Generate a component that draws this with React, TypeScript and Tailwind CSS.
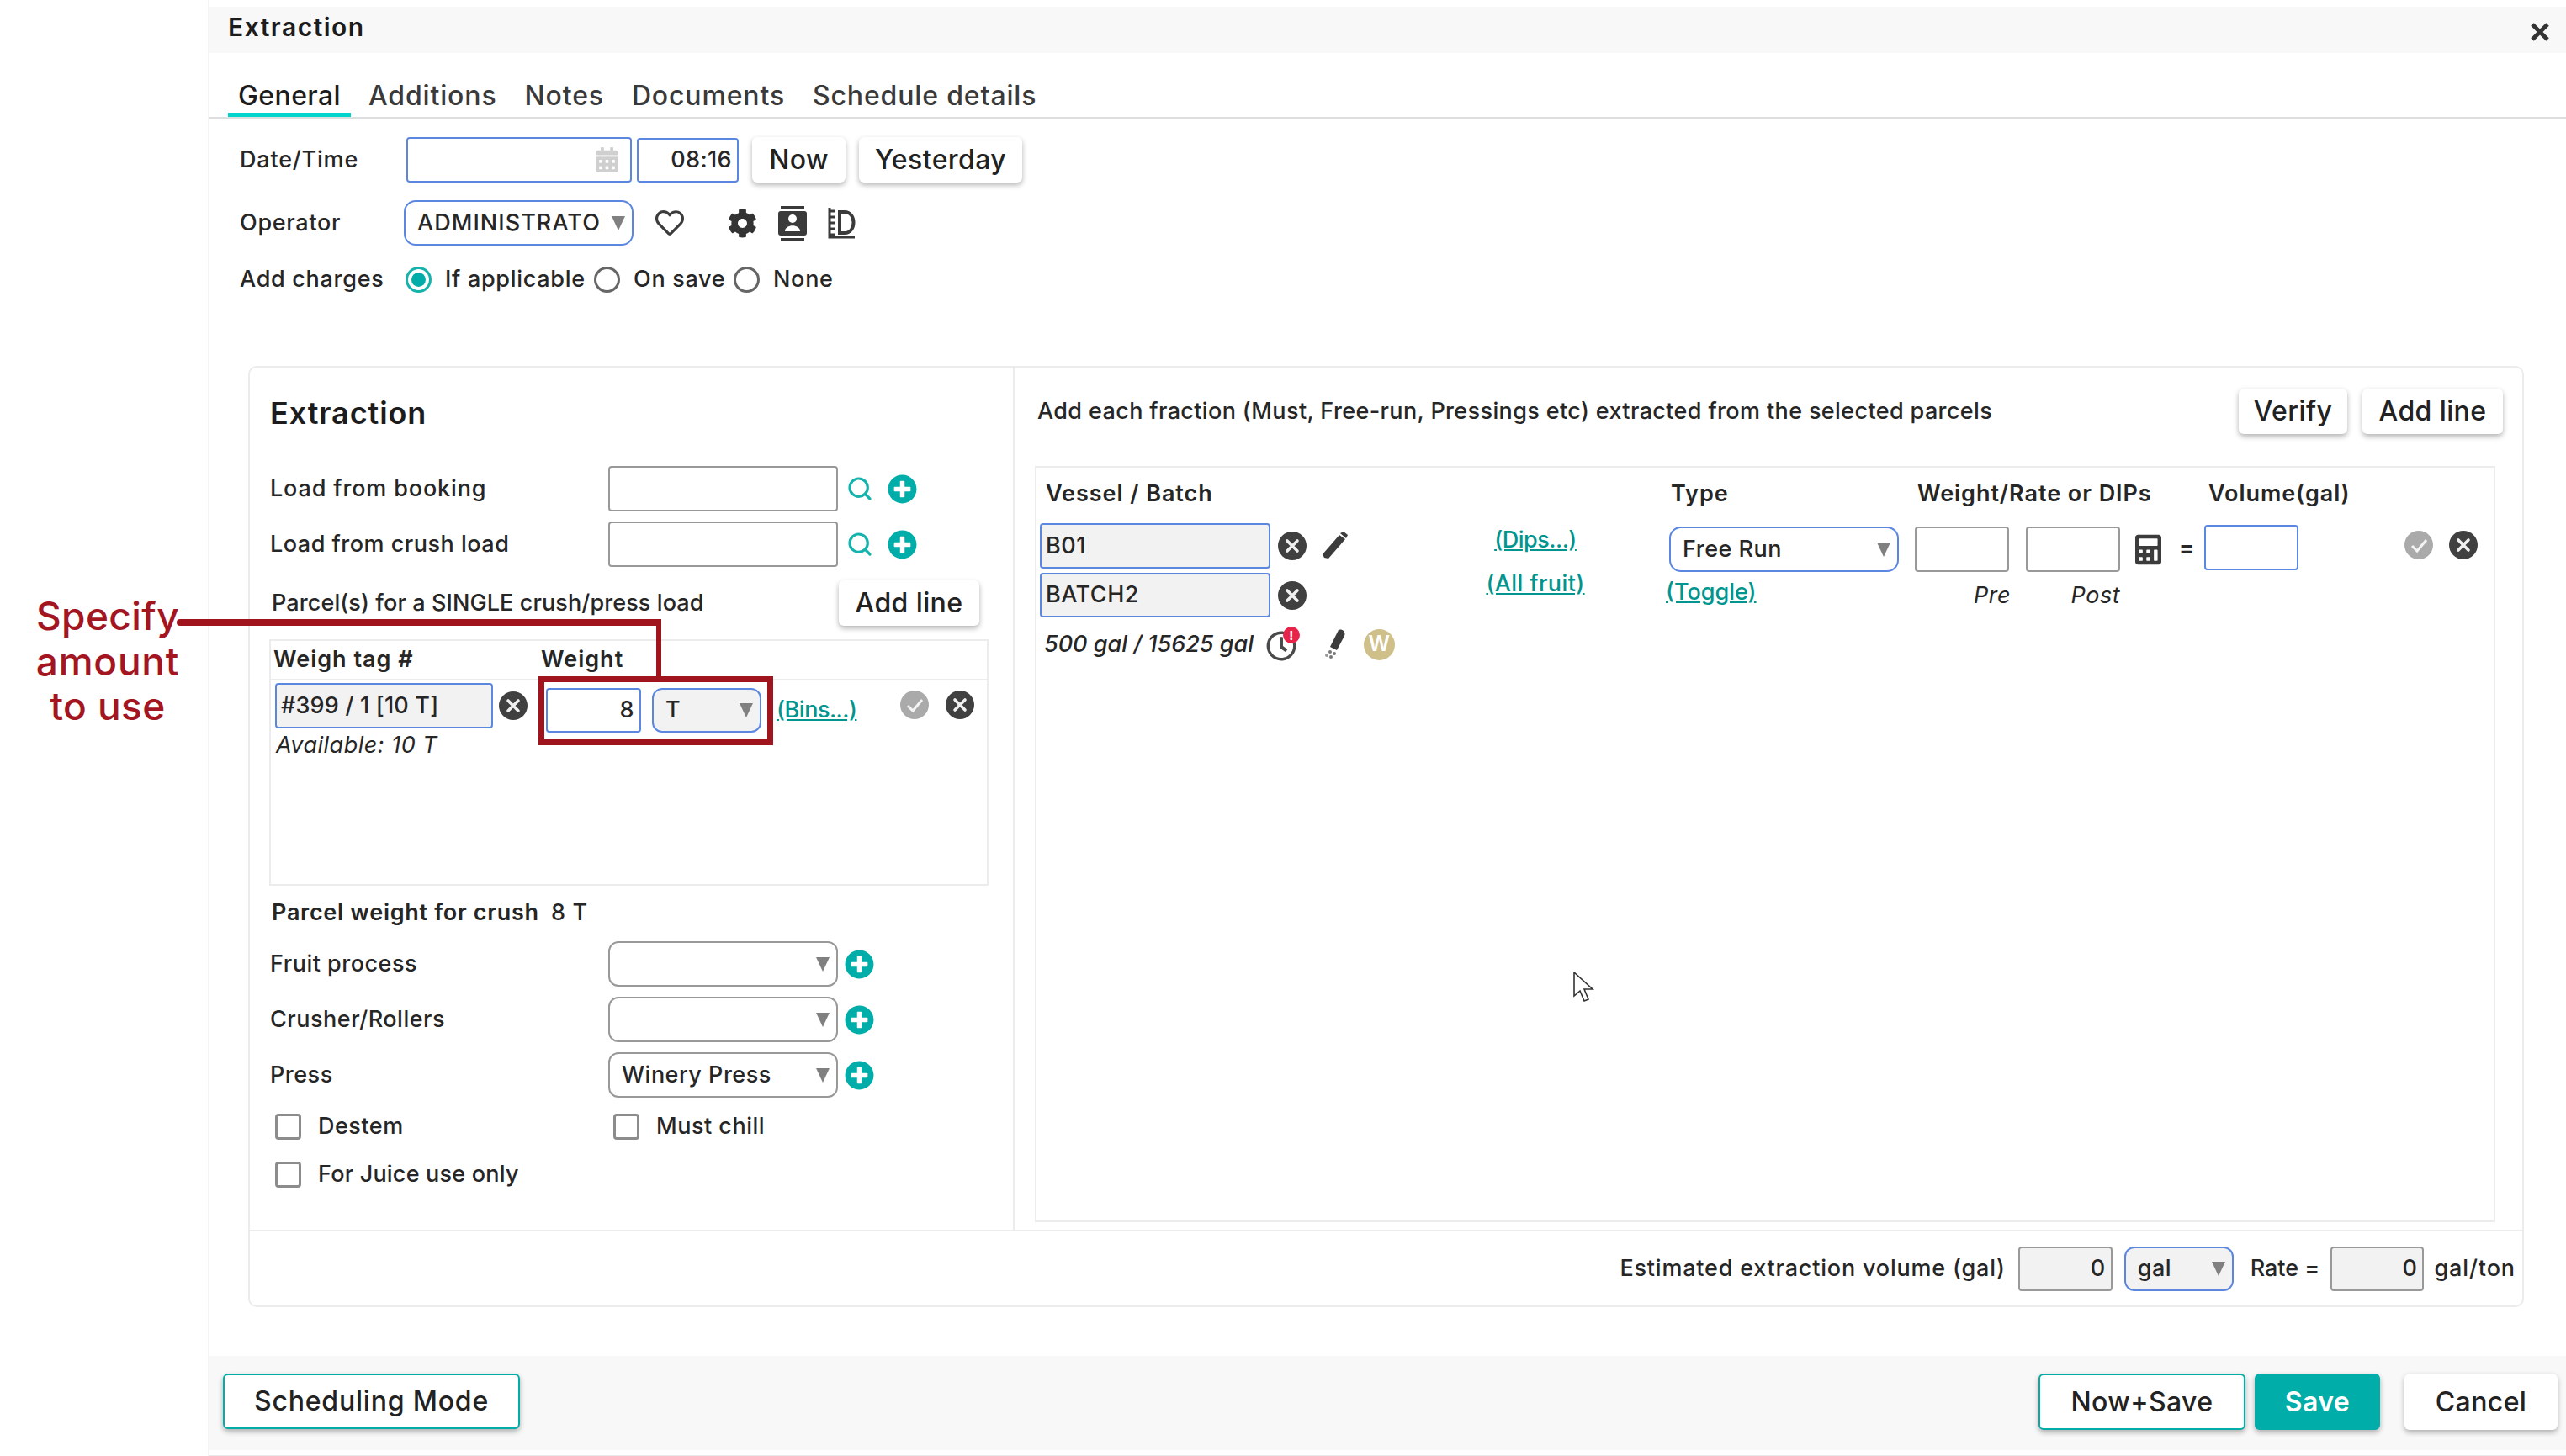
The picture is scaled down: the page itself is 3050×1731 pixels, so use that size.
import React from "react";
import { FaCog, FaRegHeart, FaPlusCircle, FaCalculator, FaRegClock, FaCalendarAlt } from "react-icons/fa";
import { Search } from "lucide-react";

const Arrow = () => (
  <svg width="16" height="17" viewBox="0 0 16 17" className="shrink-0">
    <polygon points="0,0 16,0 8,17" fill="#808080" />
  </svg>
);

const XCircle = ({ className = "" }: { className?: string }) => (
  <svg viewBox="0 0 34 34" className={"w-[34px] h-[34px] shrink-0 " + className}>
    <circle cx="17" cy="17" r="17" fill="#404040" />
    <path d="M11 11 L23 23 M23 11 L11 23" stroke="#f0f0f0" strokeWidth="3.6" strokeLinecap="round" />
  </svg>
);

const CheckCircle = ({ className = "" }: { className?: string }) => (
  <svg viewBox="0 0 34 34" className={"w-[34px] h-[34px] shrink-0 " + className}>
    <circle cx="17" cy="17" r="17" fill="#aaaaaa" />
    <path d="M9 18 L15 24 L26 11" stroke="#f4f4f4" strokeWidth="3" fill="none" />
  </svg>
);

const Plus = ({ className = "" }: { className?: string }) => (
  <FaPlusCircle className={"text-[#00ada8] w-[35px] h-[35px] shrink-0 " + className} />
);

const Lens = () => <Search className="text-[#16b3ad] w-[32px] h-[32px] shrink-0 ml-[10px]" strokeWidth={2.4} />;

const Btn = ({ className = "", children }: { className?: string; children: React.ReactNode }) => (
  <div className={"flex items-center justify-center bg-white rounded-[6px] shadow-[0_3px_6px_rgba(0,0,0,0.3)] text-[32px] text-[#222] font-medium tracking-[0.4px] shrink-0 " + className}>
    {children}
  </div>
);

const Link = ({ className = "", children }: { className?: string; children: React.ReactNode }) => (
  <span className={"text-[#00958e] underline text-[27px] font-medium tracking-[0px] " + className}>{children}</span>
);

export default function App() {
  return (
    <div className="relative w-[3050px] h-[1731px] bg-white overflow-hidden text-[27px] font-medium tracking-[0.5px] text-[#262626] [font-family:Inter,'Liberation_Sans',sans-serif]">
      <div className="ml-[247px] pt-[8px] h-full flex flex-col border-l border-[#f4f4f4]">
        {/* Title bar */}
        <div className="h-[55px] shrink-0 bg-[#f8f8f8] pl-[23px] pr-[19px] pb-[6px] flex items-center justify-between">
          <span className="text-[30px] font-semibold text-[#1c1c1c] tracking-[1.5px]">Extraction</span>
          <svg width="24" height="24" viewBox="0 0 24 24" className="mt-[10px]">
            <path d="M3 3 L21 21 M21 3 L3 21" stroke="#333" strokeWidth="5" />
          </svg>
        </div>

        {/* Tabs */}
        <div className="h-[78px] shrink-0 border-b-2 border-[#dedede] pl-[23px] flex items-end gap-[9px] text-[32px] leading-[36px] tracking-[0.85px] text-[#3a3a3a]">
          <div className="h-[50px] pt-[7px] w-[146px] flex justify-center border-b-[5px] border-[#00d4cc] text-[#1c1c1c] tracking-[0.4px]"><span>General</span></div>
          <div className="h-[50px] pt-[7px] px-[12px]">Additions</div>
          <div className="h-[50px] pt-[7px] px-[12px]">Notes</div>
          <div className="h-[50px] pt-[7px] px-[12px]">Documents</div>
          <div className="h-[50px] pt-[7px] px-[12px]">Schedule details</div>
        </div>

        {/* Date row */}
        <div className="flex items-center pl-[37px] mt-[22px] h-[54px] shrink-0">
          <span className="w-[198px] tracking-[0.8px]">Date/Time</span>
          <div className="w-[268px] h-[54px] border-2 border-[#5b87e0] rounded-[4px] flex items-center justify-end pr-[14px]">
            <FaCalendarAlt className="text-[#cfcfcf] w-[27px] h-[30px]" />
          </div>
          <div className="w-[121px] h-[53px] ml-[6px] border-2 border-[#5b87e0] rounded-[4px] flex items-center justify-end pr-[6px] tracking-[0.4px]">08:16</div>
          <Btn className="w-[111px] h-[54px] ml-[16px]">Now</Btn>
          <Btn className="w-[194px] h-[54px] ml-[16px]">Yesterday</Btn>
        </div>

        {/* Operator row */}
        <div className="flex items-center pl-[37px] mt-[21px] h-[54px] shrink-0">
          <span className="w-[195px] tracking-[0.7px]">Operator</span>
          <div className="w-[273px] h-[54px] border-2 border-[#5b87e0] rounded-[14px] flex items-center pl-[14px] overflow-hidden">
            <span className="w-[220px] shrink-0 overflow-hidden whitespace-nowrap tracking-[1.05px]">ADMINISTRATOR</span>
            <span className="ml-[11px]"><Arrow /></span>
          </div>
          <FaRegHeart className="ml-[25px] w-[36px] h-[34px] text-[#3c3c3c]" />
          <FaCog className="ml-[51px] w-[35px] h-[35px] text-[#333]" />
          <svg viewBox="0 0 34 41" className="ml-[25px] w-[34px] h-[41px]">
            <rect x="3" y="0" width="28" height="3" fill="#3a3a3a" />
            <rect x="3" y="38" width="28" height="3" fill="#3a3a3a" />
            <rect x="0" y="6" width="34" height="29" rx="3" fill="#3a3a3a" />
            <circle cx="17" cy="15" r="5" fill="#fff" />
            <path d="M8 30 C8 21 26 21 26 30 Z" fill="#fff" />
          </svg>
          <svg viewBox="0 0 33 38" className="ml-[25px] w-[33px] h-[38px]" fill="none" stroke="#3a3a3a">
            <path d="M2 1 V36 H32 M2 5 H8 M2 12 H8 M2 19 H8 M2 26 H8 M2 33 H8" strokeWidth="3" />
            <path d="M14 6 H20 C34 6 34 31 20 31 H14 Z" strokeWidth="4" />
          </svg>
        </div>

        {/* Charges row */}
        <div className="flex items-center pl-[37px] mt-[25px] h-[31px] shrink-0 tracking-[0.7px] whitespace-nowrap">
          <span className="w-[197px]">Add charges</span>
          <div className="w-[31px] h-[31px] rounded-full border-[3px] border-[#16b3ad] flex items-center justify-center">
            <div className="w-[17px] h-[17px] rounded-full bg-[#00ada8]" />
          </div>
          <span className="ml-[16px] w-[163px]">If applicable</span>
          <div className="w-[31px] h-[31px] rounded-full border-[3px] border-[#666] ml-[14px]" />
          <span className="ml-[16px] w-[104px]">On save</span>
          <div className="w-[31px] h-[31px] rounded-full border-[3px] border-[#666] ml-[15px]" />
          <span className="ml-[16px]">None</span>
        </div>

        {/* Main panel */}
        <div className="ml-[47px] mt-[87px] w-[2705px] h-[1119px] shrink-0 border-2 border-[#ececec] rounded-[10px] flex flex-col">
          <div className="h-[1027px] shrink-0 flex border-b-2 border-[#ececec]">
            {/* Left column */}
            <div className="w-[909px] shrink-0 border-r-2 border-[#ececec] pl-[24px] flex flex-col">
              <h2 className="mt-[32px] h-[44px] flex items-center text-[36px] font-semibold text-[#1c1c1c] tracking-[0.9px]">Extraction</h2>
              <div className="mt-[41px] h-[54px] flex items-center">
                <span className="w-[402px] tracking-[0.85px]">Load from booking</span>
                <div className="w-[273px] h-[54px] border-2 border-[#999] rounded-[4px]" />
                <Lens />
                <Plus className="ml-[17px]" />
              </div>
              <div className="mt-[12px] h-[54px] flex items-center">
                <span className="w-[402px]">Load from crush load</span>
                <div className="w-[273px] h-[54px] border-2 border-[#999] rounded-[4px]" />
                <Lens />
                <Plus className="ml-[17px]" />
              </div>
              <div className="mt-[16px] h-[54px] flex items-center justify-between pl-[2px] pr-[40px]">
                <span className="tracking-[0.1px]">Parcel(s) for a SINGLE crush/press load</span>
                <Btn className="w-[167px] h-[54px]">Add line</Btn>
              </div>

              {/* Parcel table */}
              <div className="mt-[16px] -ml-px w-[855px] h-[293px] border-2 border-[#ececec]">
                <div className="h-[47px] border-b-2 border-[#ececec] flex items-center pl-[3px] font-semibold tracking-[1px]">
                  <span className="w-[318px]">Weigh tag #</span>
                  <span>Weight</span>
                </div>
                <div className="flex items-start pl-[5px]">
                  <div className="w-[322px] shrink-0 pt-[3px]">
                    <div className="flex items-center">
                      <div className="w-[259px] h-[54px] bg-[#f2f2f2] border-2 border-[#5b87e0] rounded-[4px] flex items-center pl-[5px] tracking-[0.2px]">#399 / 1 [10 T]</div>
                      <XCircle className="ml-[7px]" />
                    </div>
                    <div className="mt-[4px] h-[32px] flex items-center italic font-normal pl-px">Available: 10 T</div>
                  </div>
                  <div className="w-[113px] h-[53px] mt-[9px] border-2 border-[#5b87e0] rounded-[4px] flex items-center justify-end pr-[6px]">8</div>
                  <div className="w-[130px] h-[53px] mt-[9px] ml-[13px] bg-[#f2f2f2] border-2 border-[#5b87e0] rounded-[12px] flex items-center justify-between pl-[14px] pr-[8px]">
                    <span>T</span>
                    <Arrow />
                  </div>
                  <div className="h-[53px] mt-[9px] ml-[18px] flex items-center w-[94px]"><Link className="!tracking-[-0.5px]">(Bins...)</Link></div>
                  <CheckCircle className="ml-[53px] mt-[12px]" />
                  <XCircle className="ml-[20px] mt-[12px]" />
                </div>
              </div>

              <div className="mt-[15px] h-[34px] flex items-center pl-[2px] font-semibold tracking-[0.7px]">
                <span className="w-[332px]">Parcel weight for crush</span>
                <span className="font-medium">8 T</span>
              </div>

              {[
                ["Fruit process", ""],
                ["Crusher/Rollers", ""],
                ["Press", "Winery Press"],
              ].map(([label, val], i) => (
                <div key={label} className={(i === 0 ? "mt-[17px]" : "mt-[12px]") + " h-[54px] flex items-center"}>
                  <span className="w-[402px]">{label}</span>
                  <div className="w-[273px] h-[54px] border-2 border-[#999] rounded-[12px] flex items-center justify-between pl-[14px] pr-[8px]">
                    <span>{val}</span>
                    <Arrow />
                  </div>
                  <Plus className="ml-[8px]" />
                </div>
              ))}

              <div className="mt-[19px] h-[31px] flex items-center pl-[6px]">
                <div className="w-[402px] flex items-center">
                  <div className="w-[31px] h-[31px] border-[3px] border-[#8c8c8c] rounded-[4px]" />
                  <span className="ml-[20px]">Destem</span>
                </div>
                <div className="w-[31px] h-[31px] border-[3px] border-[#8c8c8c] rounded-[4px]" />
                <span className="ml-[20px]">Must chill</span>
              </div>
              <div className="mt-[26px] h-[31px] flex items-center pl-[6px]">
                <div className="w-[31px] h-[31px] border-[3px] border-[#8c8c8c] rounded-[4px]" />
                <span className="ml-[20px] tracking-[0.2px]">For Juice use only</span>
              </div>
            </div>

            {/* Right column */}
            <div className="flex-1 min-w-0 pl-[24px] pr-[32px] flex flex-col">
              <div className="mt-[25px] h-[54px] flex items-center -mr-[9px] pl-[3px]">
                <span className="flex-1 tracking-[0.37px]">Add each fraction (Must, Free-run, Pressings etc) extracted from the selected parcels</span>
                <Btn className="w-[129px] h-[54px]">Verify</Btn>
                <Btn className="w-[167px] h-[54px] ml-[18px]">Add line</Btn>
              </div>

              <div className="mt-[38px] h-[899px] border-2 border-[#ececec] flex flex-col">
                <div className="h-[62px] shrink-0 flex items-center pl-[11px] font-semibold tracking-[0.95px]">
                  <span className="w-[743px]">Vessel / Batch</span>
                  <span className="w-[293px]">Type</span>
                  <span className="w-[346px] whitespace-nowrap">Weight/Rate or DIPs</span>
                  <span>Volume(gal)</span>
                </div>
                <div className="flex items-start pl-[4px]">
                  <div className="w-[530px] shrink-0 pt-[4px]">
                    <div className="flex items-center h-[54px]">
                      <div className="w-[274px] h-[54px] bg-[#f2f2f2] border-2 border-[#5b87e0] rounded-[4px] flex items-center pl-[5px]">B01</div>
                      <XCircle className="ml-[9px]" />
                      <svg viewBox="0 0 32 34" className="ml-[17px] w-[32px] h-[34px]">
                        <path d="M4 31 L2 27 L22 4 L29 9 L9 32 Z" fill="#3c3c3c" />
                        <path d="M23 2 L27 0 L32 4 L30 8 Z" fill="#3c3c3c" />
                      </svg>
                    </div>
                    <div className="flex items-center h-[53px] mt-[5px]">
                      <div className="w-[274px] h-[53px] bg-[#f2f2f2] border-2 border-[#5b87e0] rounded-[4px] flex items-center pl-[5px]">BATCH2</div>
                      <XCircle className="ml-[9px]" />
                    </div>
                    <div className="flex items-center h-[40px] mt-[12px] pl-[5px]">
                      <span className="italic w-[264px] whitespace-nowrap tracking-[0px]">500 gal / 15625 gal</span>
                      <div className="relative w-[37px] h-[40px] flex items-end">
                        <FaRegClock className="w-[36px] h-[36px] text-[#4a4a4a]" />
                        <div className="absolute -top-px right-[-3px] w-[20px] h-[20px] rounded-full bg-[#e8234a] flex items-center justify-center text-white text-[15px] font-bold leading-none">!</div>
                      </div>
                      <svg viewBox="0 0 26 36" className="ml-[31px] w-[26px] h-[36px]">
                        <path d="M8 21 L18 1 C22 -1 27 3 25 8 L16 25 Z" fill="#3c3c3c" />
                        <circle cx="8" cy="27" r="2" fill="#777" />
                        <circle cx="4" cy="31" r="2" fill="#999" />
                        <circle cx="9" cy="33" r="2" fill="#777" />
                        <circle cx="13" cy="29" r="2" fill="#777" />
                      </svg>
                      <div className="ml-[22px] w-[37px] h-[37px] rounded-full bg-[#cfc08a] flex items-center justify-center text-white text-[25px] font-semibold">W</div>
                    </div>
                  </div>
                  <div className="w-[118px] shrink-0 pt-[4px] flex flex-col items-center">
                    <div className="h-[40px] flex items-center"><Link className="!tracking-[-0.5px]">(Dips...)</Link></div>
                    <div className="h-[40px] mt-[12px] flex items-center"><Link className="!tracking-[0.4px]">(All fruit)</Link></div>
                  </div>
                  <div className="w-[277px] ml-[96px] shrink-0 pt-[8px] flex flex-col">
                    <div className="ml-[4px] w-[273px] h-[54px] border-2 border-[#5b87e0] rounded-[14px] flex items-center justify-between pl-[14px] pr-[8px]">
                      <span>Free Run</span>
                      <Arrow />
                    </div>
                    <div className="h-[40px] mt-[4px] flex items-center"><Link>(Toggle)</Link></div>
                  </div>
                  <div className="ml-[19px] w-[244px] shrink-0 pt-[8px]">
                    <div className="flex gap-[20px]">
                      <div className="w-[112px] h-[54px] border-2 border-[#999] rounded-[4px]" />
                      <div className="w-[112px] h-[54px] border-2 border-[#999] rounded-[4px]" />
                    </div>
                    <div className="flex mt-[8px] h-[40px] items-center italic font-normal pl-[70px]">
                      <span className="w-[116px]">Pre</span>
                      <span>Post</span>
                    </div>
                  </div>
                  <FaCalculator className="ml-[18px] mt-[16px] w-[31px] h-[39px] text-[#3c3c3c] shrink-0" />
                  <span className="ml-[21px] w-[15px] mt-[18px] h-[32px] flex items-center font-bold">=</span>
                  <div className="ml-[15px] mt-[6px] w-[112px] h-[54px] border-2 border-[#5b87e0] rounded-[4px] shrink-0" />
                  <CheckCircle className="ml-[126px] mt-[13px]" />
                  <XCircle className="ml-[19px] mt-[13px]" />
                </div>
              </div>
            </div>
          </div>

          {/* Estimated row */}
          <div className="flex-1 flex items-center justify-end pr-[8px]">
            <span className="tracking-[0.8px]">Estimated extraction volume (gal)</span>
            <div className="w-[112px] h-[53px] ml-[15px] bg-[#f2f2f2] border-2 border-[#999] rounded-[4px] flex items-center justify-end pr-[6px]">0</div>
            <div className="w-[130px] h-[53px] ml-[14px] bg-[#f2f2f2] border-2 border-[#5b87e0] rounded-[12px] flex items-center justify-between pl-[14px] pr-[8px]">
              <span>gal</span>
              <Arrow />
            </div>
            <span className="ml-[20px] tracking-[0px]">Rate =</span>
            <div className="w-[111px] h-[53px] ml-[13px] bg-[#f2f2f2] border-2 border-[#999] rounded-[4px] flex items-center justify-end pr-[6px]">0</div>
            <span className="ml-[12px] tracking-[0.9px]">gal/ton</span>
          </div>
        </div>

        {/* Dialog footer */}
        <div className="mt-[58px] h-[112px] shrink-0 bg-[#f8f8f8] pl-[17px] pr-[10px] pt-[21px] flex items-start justify-between">
          <Btn className="w-[353px] h-[66px] border-2 border-[#00ada8] !tracking-[0.8px]">Scheduling Mode</Btn>
          <div className="flex">
            <Btn className="w-[246px] h-[67px] border-2 border-[#00ada8]">Now+Save</Btn>
            <Btn className="w-[149px] h-[67px] ml-[11px] !bg-[#00ada8] !text-white font-semibold">Save</Btn>
            <Btn className="w-[182px] h-[67px] ml-[29px]">Cancel</Btn>
          </div>
        </div>
        <div className="mt-[6px] h-[2px] bg-[#e8e8e8] shrink-0" />
      </div>

      {/* Annotation overlay */}
      <div className="absolute left-[24px] top-[706px] w-[208px] flex flex-col items-center text-[46px] leading-[53.5px] font-medium tracking-[0.4px] text-[#a31621]">
        <span>Specify</span>
        <span className="tracking-[0.8px]">amount</span>
        <span>to use</span>
      </div>
      <div className="absolute left-[210px] top-[736px] w-[576px] h-[8px] bg-[#a0141e] rounded-l-full" />
      <div className="absolute left-[780px] top-[736px] w-[6px] h-[70px] bg-[#a0141e]" />
      <div className="absolute left-[640px] top-[804px] w-[279px] h-[82px] border-[7px] border-[#a0141e]" />

      {/* Mouse cursor */}
      <svg viewBox="0 0 26 40" className="absolute left-[1870px] top-[1155px] w-[26px] h-[40px]">
        <path d="M1 1 L1 29 L8 23 L13 35 L18 33 L13 21 L23 21 Z" fill="#fff" stroke="#333" strokeWidth="1.6" />
      </svg>
    </div>
  );
}
